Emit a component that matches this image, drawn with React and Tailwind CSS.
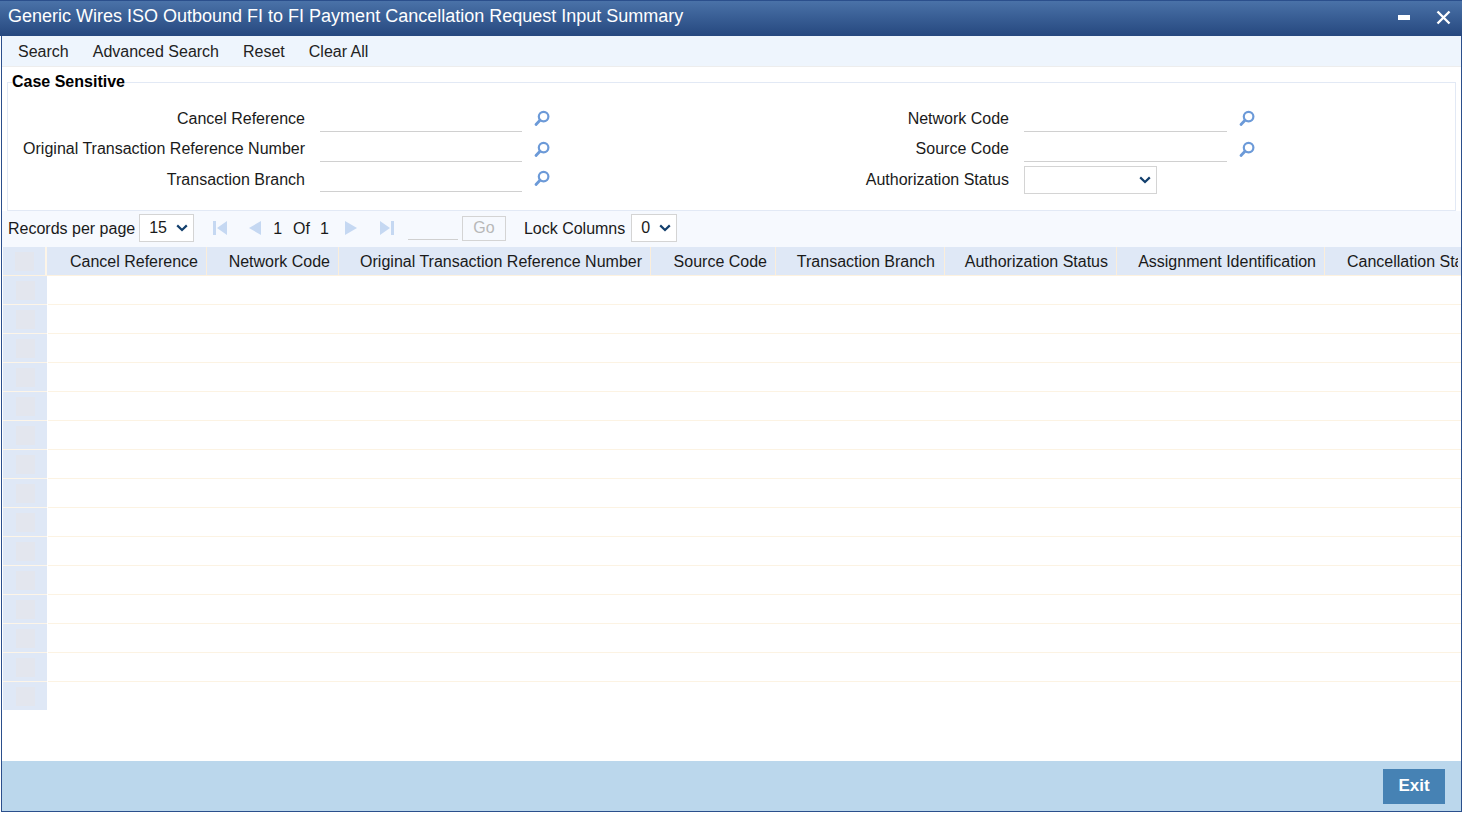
import React from "react";

const Glass = () => (
  <svg width="16" height="17" viewBox="0 0 16 17" fill="none" className="block">
    <circle cx="9.6" cy="6.6" r="4.8" stroke="#6C9AD8" strokeWidth="2.2" />
    <path d="M6 10.2 L2 14.5" stroke="#6C9AD8" strokeWidth="2.8" strokeLinecap="round" />
  </svg>
);

const Chevron = () => (
  <svg width="12" height="8" viewBox="0 0 12 8" fill="none" className="block">
    <path d="M1.2 1.4 L6 6 L10.8 1.4" stroke="#123F6D" strokeWidth="2.2" />
  </svg>
);

const Select = ({ value, w }) => (
  <div className={`flex h-[28px] items-center justify-between border border-[#d4d4d4] bg-white pl-[9px] pr-[5px] ${w}`}>
    <span>{value}</span>
    <Chevron />
  </div>
);

const Field = ({ label, labelW, inputW, labelPt = "pt-[7px]", iconPt = "pt-[7px]" }) => (
  <div className="flex h-[30px] items-start">
    <div className={`text-right leading-[18px] ${labelPt} ${labelW}`}>{label}</div>
    <div className={`ml-[15px] h-[29px] border-b border-[#d0d0d0] ${inputW}`} />
    <div className={`ml-[12px] ${iconPt}`}><Glass /></div>
  </div>
);

const Nav = ({ d, w = 16 }) => (
  <svg width={w} height="14" viewBox={`0 0 ${w} 14`} className="block">
    <path d={d} fill="#C5D8F2" />
  </svg>
);

const columns = [
  ["Cancel Reference", "w-[160px]", "pr-[8px]"],
  ["Network Code", "w-[132px]", "pr-[8px]"],
  ["Original Transaction Reference Number", "w-[312px]", "pr-[8px]"],
  ["Source Code", "w-[125px]", "pr-[8px]"],
  ["Transaction Branch", "w-[169px]", "pr-[9px]"],
  ["Authorization Status", "w-[172px]", "pr-[8px]"],
  ["Assignment Identification", "w-[208px]", "pr-[8px]"],
];

const rows = Array.from({ length: 15 }, (_, i) => i);

export default function App() {
  return (
    <div className="h-[813px] w-[1465px] overflow-hidden bg-white font-['Liberation_Sans',Arial,sans-serif] text-[16px] text-[#1a1a1a]">
      <div className="ml-[1px] flex h-[812px] w-[1461px] flex-col border-x border-b border-[#2b4f8c]">
        <header className="-ml-[2px] -mr-[1px] flex h-[36px] shrink-0 items-center justify-between border-t border-[#2b4f8c] bg-gradient-to-b from-[#4a72a8] to-[#26487f] pl-[8px] pr-[11px] text-[18px] text-white">
          <span className="pb-[4px]">Generic Wires ISO Outbound FI to FI Payment Cancellation Request Input Summary</span>
          <div className="mb-[2px] flex items-center gap-[26px]">
            <span className="block h-[5px] w-[12px] bg-white" />
            <svg width="15" height="15" viewBox="0 0 15 15" className="block">
              <path d="M1.5 1.5 L13.5 13.5 M13.5 1.5 L1.5 13.5" stroke="#fff" strokeWidth="2.4" />
            </svg>
          </div>
        </header>

        <nav className="flex h-[31px] shrink-0 items-center gap-[24px] border-b border-[#ededed] bg-[#eef5fd] pl-[16px] pt-[2px] text-[#222]">
          <span>Search</span>
          <span>Advanced Search</span>
          <span>Reset</span>
          <span>Clear All</span>
        </nav>

        <div className="relative mx-[5px] mt-[15px] h-[129px] shrink-0 border border-[#e2e9f5] pt-[20px]">
          <span className="absolute -top-[10px] left-[4px] bg-white text-[16px] font-bold leading-[18px] text-black">Case Sensitive</span>
          <div className="flex">
            <div className="flex flex-col">
              <Field label="Cancel Reference" labelW="w-[297px]" inputW="w-[202px]" />
              <Field label="Original Transaction Reference Number" labelW="w-[297px]" inputW="w-[202px]" iconPt="pt-[8px]" />
              <Field label="Transaction Branch" labelW="w-[297px]" inputW="w-[202px]" labelPt="pt-[8px]" />
            </div>
            <div className="ml-[163px] flex flex-col">
              <Field label="Network Code" labelW="w-[296px]" inputW="w-[203px]" />
              <Field label="Source Code" labelW="w-[296px]" inputW="w-[203px]" iconPt="pt-[8px]" />
              <div className="flex h-[30px] items-start">
                <div className="w-[296px] pt-[8px] text-right leading-[18px]">Authorization Status</div>
                <div className="ml-[15px] mt-[3px]"><Select value="" w="w-[133px]" /></div>
              </div>
            </div>
          </div>
        </div>

        <div className="flex h-[36px] shrink-0 items-center bg-[#f6f9fe] pb-[2px] pl-[6px]">
          <span className="mt-[2px]">Records per page</span>
          <div className="ml-[4px]"><Select value="15" w="w-[55px]" /></div>
          <div className="ml-[19px]"><Nav w={14} d="M0 0 H3 V14 H0 Z M14 0 V14 L4 7 Z" /></div>
          <div className="ml-[21px]"><Nav w={13} d="M13 0 V14 L1 7 Z" /></div>
          <span className="ml-[12px] mt-[2px]">1</span>
          <span className="ml-[11px] mt-[2px]">Of</span>
          <span className="ml-[10px] mt-[2px]">1</span>
          <div className="ml-[16px]"><Nav w={13} d="M0 0 V14 L12 7 Z" /></div>
          <div className="ml-[22px]"><Nav w={14} d="M0 0 V14 L10 7 Z M11 0 H14 V14 H11 Z" /></div>
          <div className="ml-[14px] h-[24px] w-[50px] border-b border-[#d0d0d0]" />
          <div className="ml-[4px] flex h-[25px] w-[44px] items-center justify-center border border-[#d4d4d4] text-[#b8b8b8]">Go</div>
          <span className="ml-[18px] mt-[2px]">Lock Columns</span>
          <div className="ml-[6px]"><Select value="0" w="w-[46px]" /></div>
        </div>

        <div className="min-h-0 flex-1 overflow-hidden">
          <div className="ml-[1px] flex h-[29px] border-b border-[#fdf2e0] bg-[#dfe8f6]">
            <div className="flex w-[44px] shrink-0 items-center justify-center border-r-2 border-[#fdf5e8]">
              <span className="block h-[19px] w-[19px] bg-[#e3e6ee]" />
            </div>
            {columns.map(([name, w, pr]) => (
              <div key={name} className={`flex shrink-0 items-center justify-end border-r border-[#fbeedb] pt-[2px] ${pr} ${w}`}>
                {name}
              </div>
            ))}
            <div className="flex min-w-0 flex-1 items-center overflow-hidden whitespace-nowrap pl-[22px] pr-[3px] pt-[2px]">
              <span className="overflow-hidden">Cancellation Status</span>
            </div>
          </div>
          {rows.map((i) => (
            <div key={i} className={`flex ${i < 14 ? "h-[29px]" : "h-[28px]"}`}>
              <div className={`ml-[1px] flex w-[44px] shrink-0 items-center justify-center bg-[#dfe8f6] ${i < 14 ? "border-b border-[#fdf5e8]" : ""}`}>
                <span className="block h-[19px] w-[19px] bg-[#e3e6ee]" />
              </div>
              <div className={`flex-1 ${i < 14 ? "ml-[1px] border-b border-[#fcf3e3]" : ""}`} />
            </div>
          ))}
        </div>

        <footer className="flex h-[50px] shrink-0 items-center justify-end bg-[#bbd7ec] pr-[16px] pt-[1px]">
          <div className="flex h-[35px] w-[62px] items-center justify-center bg-[#4682b4] pb-[2px] text-[17px] font-bold text-white">Exit</div>
        </footer>
      </div>
    </div>
  );
}
